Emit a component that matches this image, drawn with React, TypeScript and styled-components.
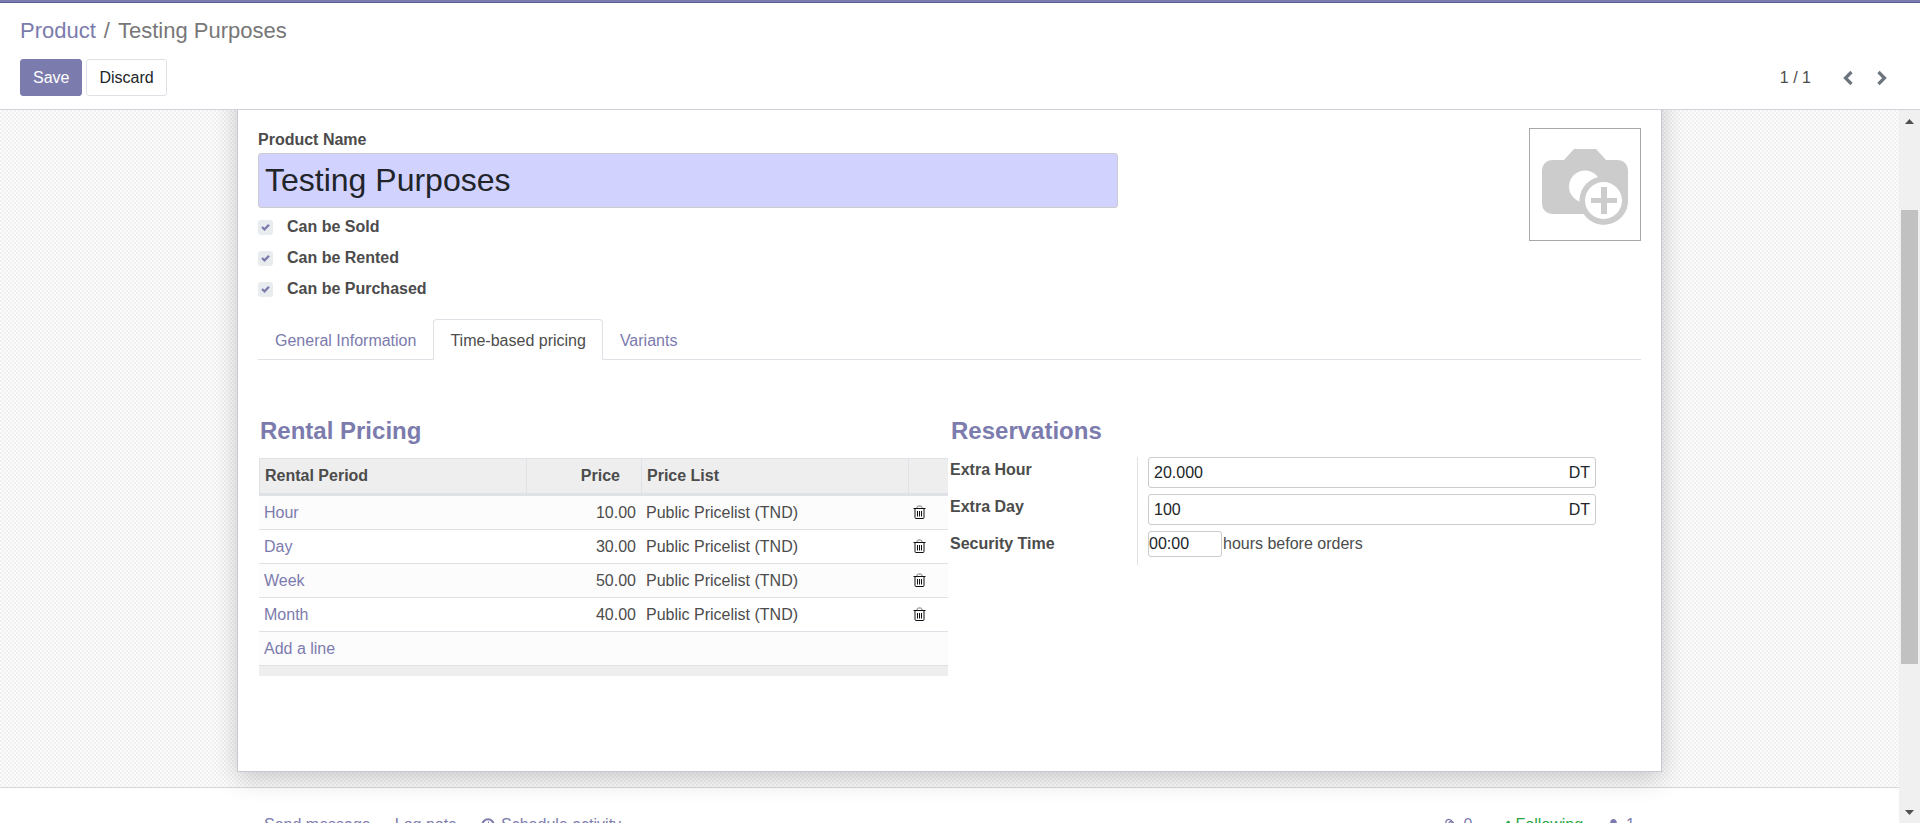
import React from "react";
import styled, { createGlobalStyle } from "styled-components";
import { FaCheck, FaUser } from "react-icons/fa";

const purple = "#7c7bad";
const line = "#dee2e6";

const Global = createGlobalStyle`
  *, *::before, *::after { box-sizing: border-box; }
  body {
    margin: 0;
    background: #fff;
    color: #4c4c4c;
    font: 16px/24px "Liberation Sans", Arial, sans-serif;
  }
  button, input { font: inherit; }
  a { color: ${purple}; text-decoration: none; }
`;

const Shell = styled.div`
  display: flex;
  flex-direction: column;
  height: 100vh;
  overflow: hidden;
`;

const ControlPanel = styled.header`
  flex: none;
  padding: 15px 20px 13px;
  border-top: 2px solid ${purple};
  border-bottom: 1px solid #ced4da;
  box-shadow: inset 0 1px #5f5e97;
`;

const Breadcrumb = styled.nav`
  display: flex;
  gap: 8px;
  font-size: 22px;
  line-height: 28px;
  color: #777;
`;

const ActionRow = styled.div`
  display: flex;
  align-items: center;
  justify-content: space-between;
  margin-top: 14px;
`;

const ButtonGroup = styled.div`
  display: flex;
  gap: 4px;
`;

const Button = styled.button<{ $primary?: boolean }>`
  height: 37px;
  padding: 0 12px;
  border: 1px solid ${(p) => (p.$primary ? purple : line)};
  border-radius: 3px;
  background: ${(p) => (p.$primary ? purple : "#fff")};
  color: ${(p) => (p.$primary ? "#fff" : "#212529")};
`;

const Pager = styled.div`
  display: flex;
  align-items: center;
  padding-right: 1px;
`;

const PagerCount = styled.span`
  margin-right: 20px;
`;

const PagerButton = styled.button`
  display: flex;
  justify-content: center;
  width: 34px;
  padding: 0;
  border: 0;
  background: none;
  color: #6c757d;
`;

const Body = styled.div`
  display: flex;
  flex: 1;
  min-height: 0;
`;

const Content = styled.main`
  flex: 1;
  min-width: 0;
  overflow: hidden;
`;

const SheetArea = styled.div`
  padding: 0 237px 15px;
  background: #fcfcfc conic-gradient(#f1f1f1 25%, #fcfcfc 0 50%, #f1f1f1 0 75%, #fcfcfc 0) 0 0 / 4px 4px;
`;

/* The sheet starts above the visible part of the scroll area. */
const Sheet = styled.section`
  position: relative;
  margin-top: -32px;
  padding: 50px 20px 95px;
  border: 1px solid #c8c8d3;
  border-top: 0;
  background: #fff;
  box-shadow: 0 6px 24px rgba(0, 0, 0, 0.2);
`;

const SheetTop = styled.div`
  display: flex;
  align-items: flex-start;
  justify-content: space-between;
`;

const Title = styled.div`
  display: flex;
  flex-direction: column;
  width: 860px;
`;

const TitleLabel = styled.label`
  font-weight: bold;
`;

const TitleInput = styled.input`
  height: 55px;
  margin: 1px 0 7px;
  padding: 0 6px;
  border: 1px solid #ccc;
  border-radius: 3px;
  background: #d2d2ff;
  color: #212529;
  font-size: 32px;
`;

const Option = styled.label`
  display: flex;
  align-items: center;
  gap: 14px;
  height: 24px;
  margin-bottom: 7px;
  font-weight: bold;
`;

const CheckWrap = styled.span`
  display: grid;
  width: 15px;
  height: 15px;
  place-items: center;

  > * { grid-area: 1 / 1; }
  svg { pointer-events: none; color: ${purple}; }
`;

const Checkbox = styled.input`
  appearance: none;
  width: 15px;
  height: 15px;
  margin: 0;
  border-radius: 3px;
  background: #e9ecef;
`;

const Avatar = styled.button`
  display: flex;
  align-items: center;
  justify-content: center;
  width: 112px;
  height: 113px;
  padding: 5px 0 0;
  border: 1px solid #a8a8a8;
  background: #fff;
`;

const Tabs = styled.div`
  display: flex;
  margin-top: 11px;
  border-bottom: 1px solid ${line};
`;

const Tab = styled.button<{ $active?: boolean }>`
  height: 41px;
  margin-bottom: -1px;
  padding: 2px 16px 0;
  border: 1px solid ${(p) => (p.$active ? line : "transparent")};
  border-bottom-color: ${(p) => (p.$active ? "#fff" : "transparent")};
  border-radius: 4px 4px 0 0;
  background: ${(p) => (p.$active ? "#fff" : "transparent")};
  color: ${(p) => (p.$active ? "#4c4c4c" : purple)};
`;

const Columns = styled.div`
  display: grid;
  grid-template-columns: minmax(0, 689fr) minmax(0, 690fr);
  column-gap: 2px;
  margin-top: 56px;
  padding: 0 1px;
`;

const Column = styled.section`
  min-width: 0;
`;

const Heading = styled.h2`
  margin: 0 0 12px;
  padding: 0 1px;
  color: ${purple};
  font-size: 24px;
  line-height: 30px;
`;

const Table = styled.table`
  width: 100%;
  table-layout: fixed;
  border-spacing: 0;
  border-collapse: separate;
`;

const HeadCell = styled.th<{ $numeric?: boolean }>`
  height: 38px;
  padding: 0 ${(p) => (p.$numeric ? "21px" : "5px")} 0 5px;
  border: 1px solid ${line};
  border-width: 1px 0 3px 1px;
  background: #eee;
  text-align: ${(p) => (p.$numeric ? "right" : "left")};
`;

const Row = styled.tr`
  &:nth-child(odd) { background: #fcfcfc; }
`;

const Cell = styled.td<{ $numeric?: boolean }>`
  height: 34px;
  padding: 0 5px;
  border-bottom: 1px solid ${line};
  text-align: ${(p) => (p.$numeric ? "right" : "left")};
`;

const FootCell = styled.td`
  height: 10px;
  padding: 0;
  background: #eee;
`;

const DeleteButton = styled.button`
  display: flex;
  padding: 0;
  border: 0;
  background: none;
  color: #111;
`;

const Fields = styled.div`
  display: grid;
  grid-template-columns: 187px 1fr;
  margin-top: -1px;
`;

const LabelList = styled.div`
  display: flex;
  flex-direction: column;
  gap: 13px;
  padding-top: 1px;
  font-weight: bold;
`;

const ValueList = styled.div`
  display: flex;
  flex-direction: column;
  gap: 6px;
  padding: 0 44px 8px 10px;
  border-left: 1px solid ${line};
`;

const MoneyBox = styled.span`
  display: flex;
  align-items: center;
  height: 31px;
  padding: 0 5px;
  border: 1px solid #ccc;
  border-radius: 3px;
  color: #212529;
`;

const MoneyInput = styled.input`
  flex: 1;
  min-width: 0;
  padding: 0;
  border: 0;
  background: none;
  color: inherit;
`;

const Security = styled.div`
  display: flex;
  align-items: center;
  gap: 1px;
`;

const TimeInput = styled.input`
  width: 74px;
  height: 26px;
  padding: 0;
  border: 1px solid #ccc;
  border-radius: 3px;
  color: #212529;
`;

const Chatter = styled.footer`
  display: flex;
  justify-content: space-between;
  padding: 25px 264px;
  border-top: 1px solid #d8d8d8;
`;

const ChatterGroup = styled.div`
  display: flex;
  gap: 24px;
`;

const ChatterLink = styled.a<{ $green?: boolean }>`
  display: flex;
  align-items: center;
  gap: 6px;
  color: ${(p) => (p.$green ? "#28a745" : purple)};
`;

const Scrollbar = styled.div`
  display: flex;
  flex: none;
  flex-direction: column;
  align-items: center;
  width: 21px;
  background: #f0f0f0;
  color: #505050;
`;

const Track = styled.div`
  display: flex;
  flex: 1;
  flex-direction: column;
  padding: 79px 0 138px;
`;

const Thumb = styled.div`
  flex: 1;
  width: 17px;
  background: #c1c1c1;
`;

const ScrollArrow = ({ down }: { down?: boolean }) => (
  <svg width="21" height="21" viewBox="0 0 21 21" fill="currentColor" aria-hidden="true">
    <path d={down ? "M6 8h9l-4.5 5z" : "M6 14h9l-4.5-5z"} />
  </svg>
);

const Chevron = ({ right }: { right?: boolean }) => (
  <svg width="12" height="16" viewBox="0 0 12 16" fill="none" stroke="currentColor" strokeWidth="3.200" aria-hidden="true">
    <path d={right ? "M2.500 2l6 6-6 6" : "M9.500 2l-6 6 6 6"} />
  </svg>
);

const TickIcon = () => (
  <svg width="9" height="8" viewBox="0 0 9 8" fill="none" stroke="currentColor" strokeWidth="2.300" aria-hidden="true">
    <path d="M1 4l2.500 2.300L8 1.800" />
  </svg>
);

const CameraIcon = () => (
  <svg width="86" height="76" viewBox="0 0 86 76" aria-hidden="true">
    <path
      fill="#ccc"
      d="M10 11h12L32 0h22l10 11h12a10 10 0 0 1 10 10v30a24 24 0 0 1-44 14H10A10 10 0 0 1 0 55V21A10 10 0 0 1 10 11z"
    />
    <circle cx="43" cy="37.500" r="16" fill="#fff" />
    <circle cx="61.500" cy="51.500" r="24" fill="#ccc" />
    <circle cx="61.500" cy="51.500" r="18.500" fill="#fff" />
    <path d="M59 38h6v11h10v5H65v11h-6V54H49v-5h10z" fill="#ccc" />
  </svg>
);

const TrashIcon = () => (
  <svg width="13" height="15" viewBox="0 0 13 15" fill="none" stroke="currentColor" aria-hidden="true">
    <path d="M4 3c0-1.500.5-2 1.500-2h2C8.500 1 9 1.500 9 3" stroke="#777" />
    <path d="M.5 3.500h12M2 3.500v9q0 1 1 1h7q1 0 1-1v-9" />
    <path d="M4.500 6v5.500M6.500 6v5.500M8.500 6v5.500" />
  </svg>
);

const ClockIcon = () => (
  <svg width="14" height="14" viewBox="0 0 14 14" fill="none" stroke="currentColor" aria-hidden="true">
    <circle cx="7" cy="7" r="5.700" strokeWidth="2" />
    <path d="M7.500 3.500v4H5" />
  </svg>
);

const ClipIcon = () => (
  <svg width="13" height="15" viewBox="0 0 13 15" fill="none" stroke="currentColor" strokeWidth="1.300" aria-hidden="true">
    <path d="M9 10.500L4.500 6q-1-1.500.3-2.200 1-.5 2 .5l4.400 4.500q2 2.500.3 4.200-2 1.500-4-.5L1.800 6.500Q0 4 1.700 2.200q2-1.800 4.500.3L10.500 7" />
  </svg>
);

const options = ["Can be Sold", "Can be Rented", "Can be Purchased"];
const prices = [
  ["Hour", "10.00"],
  ["Day", "30.00"],
  ["Week", "50.00"],
  ["Month", "40.00"],
];

export default function App() {
  return (
    <>
      <Global />
      <Shell>
        <ControlPanel>
          <Breadcrumb>
            <a href="#product">Product</a>
            <span>/</span>
            <span>Testing Purposes</span>
          </Breadcrumb>
          <ActionRow>
            <ButtonGroup>
              <Button $primary>Save</Button>
              <Button>Discard</Button>
            </ButtonGroup>
            <Pager>
              <PagerCount>1 / 1</PagerCount>
              <PagerButton aria-label="Previous"><Chevron /></PagerButton>
              <PagerButton aria-label="Next"><Chevron right /></PagerButton>
            </Pager>
          </ActionRow>
        </ControlPanel>
        <Body>
          <Content>
            <SheetArea>
              <Sheet>
                <SheetTop>
                  <Title>
                    <TitleLabel htmlFor="name">Product Name</TitleLabel>
                    <TitleInput id="name" defaultValue="Testing Purposes" />
                    {options.map((option) => (
                      <Option key={option}>
                        <CheckWrap>
                          <Checkbox type="checkbox" defaultChecked />
                          <TickIcon />
                        </CheckWrap>
                        {option}
                      </Option>
                    ))}
                  </Title>
                  <Avatar aria-label="Product image"><CameraIcon /></Avatar>
                </SheetTop>
                <Tabs role="tablist">
                  <Tab role="tab">General Information</Tab>
                  <Tab role="tab" aria-selected $active>Time-based pricing</Tab>
                  <Tab role="tab">Variants</Tab>
                </Tabs>
                <Columns>
                  <Column>
                    <Heading>Rental Pricing</Heading>
                    <Table>
                      <colgroup>
                        <col />
                        <col width="115" />
                        <col width="267" />
                        <col width="40" />
                      </colgroup>
                      <thead>
                        <tr>
                          <HeadCell>Rental Period</HeadCell>
                          <HeadCell $numeric>Price</HeadCell>
                          <HeadCell>Price List</HeadCell>
                          <HeadCell />
                        </tr>
                      </thead>
                      <tbody>
                        {prices.map(([period, price]) => (
                          <Row key={period}>
                            <Cell><a href="#period">{period}</a></Cell>
                            <Cell $numeric>{price}</Cell>
                            <Cell>Public Pricelist (TND)</Cell>
                            <Cell><DeleteButton aria-label={"Delete " + period}><TrashIcon /></DeleteButton></Cell>
                          </Row>
                        ))}
                        <Row>
                          <Cell colSpan={4}><a href="#add">Add a line</a></Cell>
                        </Row>
                      </tbody>
                      <tfoot>
                        <tr><FootCell colSpan={4} /></tr>
                      </tfoot>
                    </Table>
                  </Column>
                  <Column>
                    <Heading>Reservations</Heading>
                    <Fields>
                      <LabelList>
                        <label htmlFor="hour">Extra Hour</label>
                        <label htmlFor="day">Extra Day</label>
                        <label htmlFor="security">Security Time</label>
                      </LabelList>
                      <ValueList>
                        <MoneyBox><MoneyInput id="hour" defaultValue="20.000" />DT</MoneyBox>
                        <MoneyBox><MoneyInput id="day" defaultValue="100" />DT</MoneyBox>
                        <Security>
                          <TimeInput id="security" defaultValue="00:00" />
                          hours before orders
                        </Security>
                      </ValueList>
                    </Fields>
                  </Column>
                </Columns>
              </Sheet>
            </SheetArea>
            <Chatter>
              <ChatterGroup>
                <ChatterLink href="#message">Send message</ChatterLink>
                <ChatterLink href="#note">Log note</ChatterLink>
                <ChatterLink href="#activity"><ClockIcon />Schedule activity</ChatterLink>
              </ChatterGroup>
              <ChatterGroup>
                <ChatterLink href="#files"><ClipIcon />0</ChatterLink>
                <ChatterLink href="#follow" $green><FaCheck size={13} />Following</ChatterLink>
                <ChatterLink href="#followers"><FaUser size={13} />1</ChatterLink>
              </ChatterGroup>
            </Chatter>
          </Content>
          <Scrollbar>
            <ScrollArrow />
            <Track><Thumb /></Track>
            <ScrollArrow down />
          </Scrollbar>
        </Body>
      </Shell>
    </>
  );
}
